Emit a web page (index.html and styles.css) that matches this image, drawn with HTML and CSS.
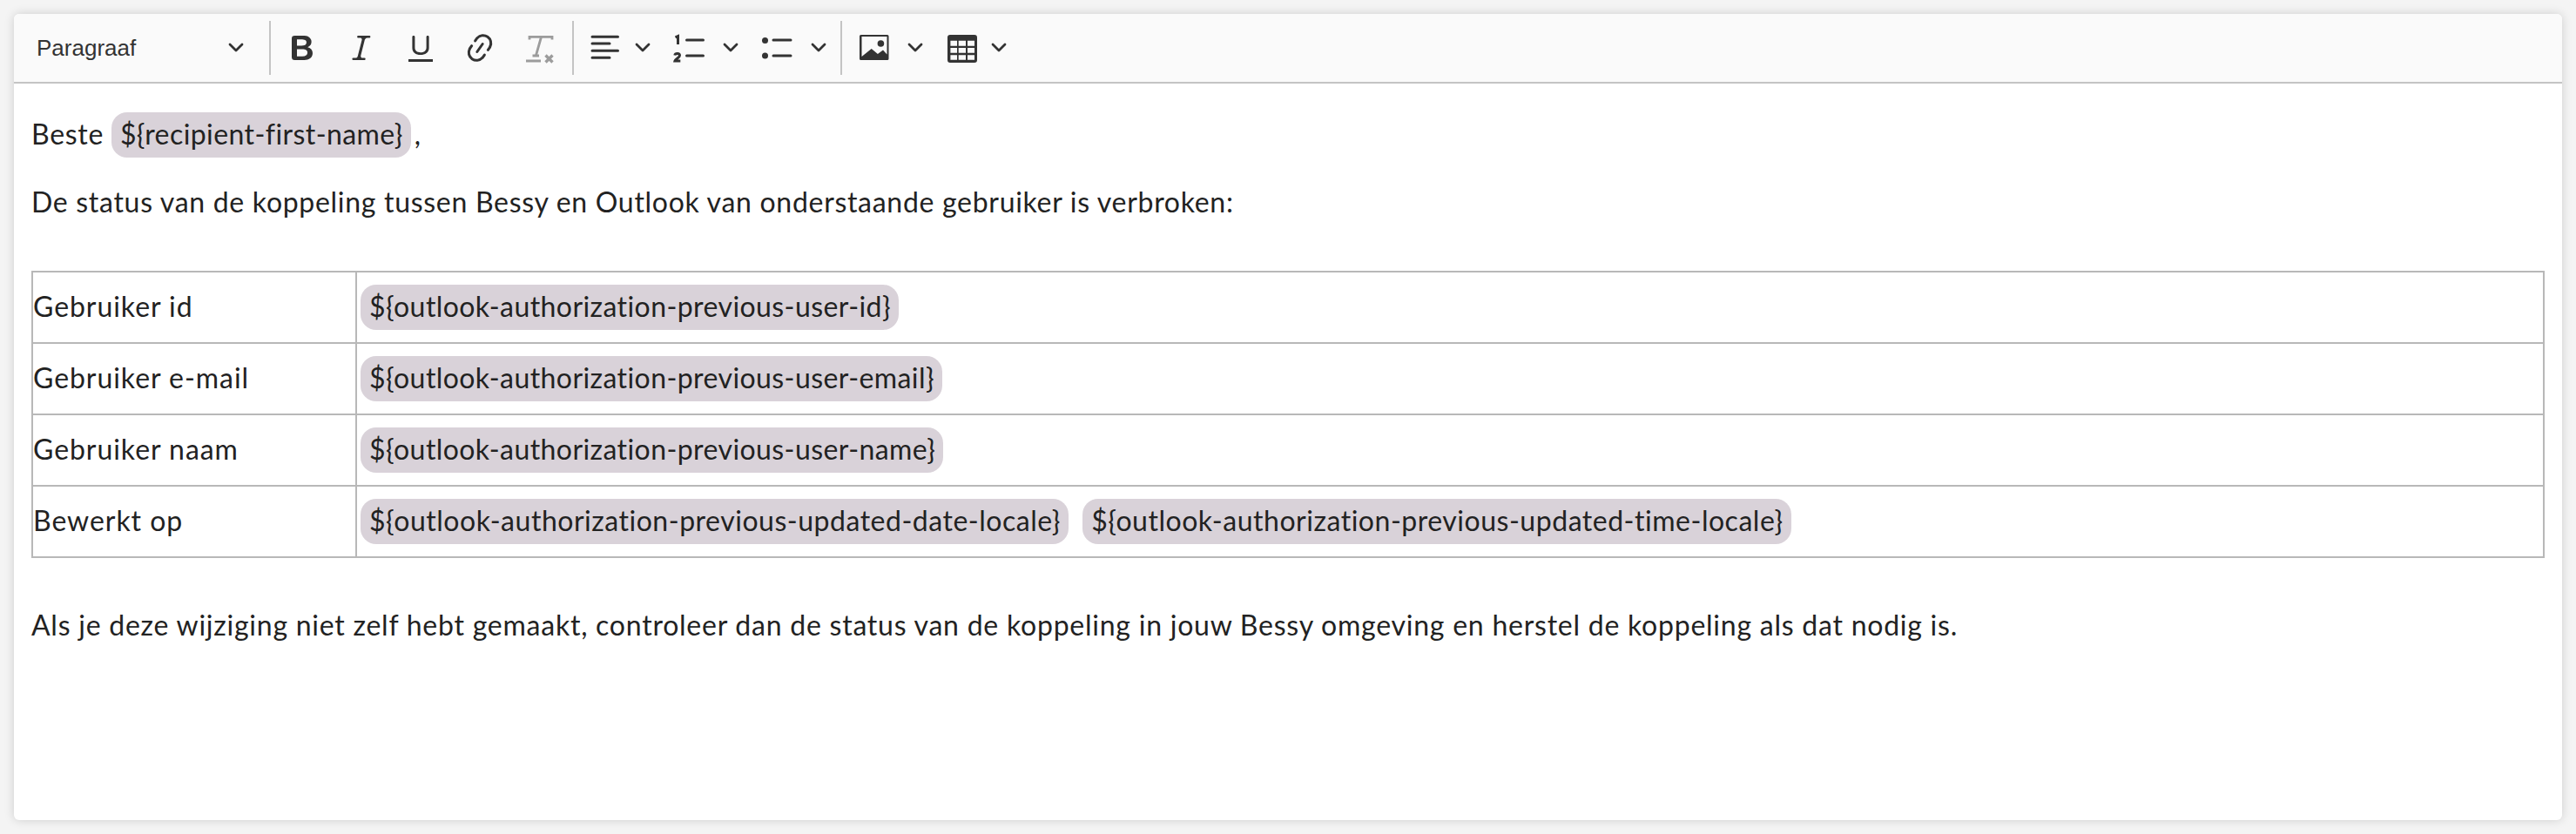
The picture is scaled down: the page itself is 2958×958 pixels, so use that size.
FILE: index.html
```html
<!DOCTYPE html>
<html lang="nl">
<head>
<meta charset="utf-8">
<title>Editor</title>
<link rel="stylesheet" href="styles.css">
</head>
<body>
<main class="editor">
  <div class="toolbar">
    <div class="heading"><span>Paragraaf</span>
      <svg class="chev" viewBox="0 0 18 12"><path d="M2 2l7 7 7-7"/></svg></div>
    <div class="sep"></div>
    <div class="btn"><svg class="icon" viewBox="0 0 20 20"><path d="M10.187 17H5.773c-.637 0-1.092-.138-1.364-.415-.273-.277-.409-.718-.409-1.323V4.738c0-.617.14-1.062.419-1.332.279-.27.73-.406 1.354-.406h4.68c.69 0 1.288.041 1.793.124.506.083.96.242 1.36.478.341.197.644.447.906.75a3.262 3.262 0 0 1 .808 2.162c0 1.401-.722 2.426-2.167 3.075C15.05 10.175 16 11.315 16 13.01a3.756 3.756 0 0 1-2.296 3.504 6.1 6.1 0 0 1-1.517.377c-.571.073-1.238.11-2 .11zm-.217-6.217H7v4.087h3.069c1.977 0 2.965-.69 2.965-2.072 0-.707-.256-1.22-.768-1.537-.512-.319-1.277-.478-2.296-.478zM7 5.13v3.619h2.606c.729 0 1.292-.067 1.69-.2a1.6 1.6 0 0 0 .91-.765c.165-.267.247-.566.247-.897 0-.707-.26-1.176-.778-1.409-.519-.232-1.31-.348-2.375-.348H7z"/></svg></div>
    <div class="btn"><svg class="icon" viewBox="0 0 20 20"><path d="m9.586 14.633.021.004c-.036.335.095.655.393.962.082.083.173.15.274.201h1.474a.6.6 0 1 1 0 1.2H5.304a.6.6 0 0 1 0-1.2h1.15c.474-.07.809-.182 1.005-.334.157-.122.291-.32.404-.597l2.416-9.55a1.053 1.053 0 0 0-.281-.823 1.12 1.12 0 0 0-.442-.296H8.15a.6.6 0 0 1 0-1.2h6.443a.6.6 0 1 1 0 1.2h-1.195c-.376.056-.65.155-.823.296-.215.175-.423.439-.623.79l-2.366 9.347z"/></svg></div>
    <div class="btn"><svg class="icon" viewBox="0 0 20 20"><path d="M3 18v-1.500h14V18zm2.200-8V3.600c0-.4.4-.6.8-.6.3 0 .7.2.7.6v6.200c0 2 1.300 2.800 3.200 2.800 1.900 0 3.400-.9 3.400-2.900V3.600c0-.4.4-.6.8-.6.3 0 .7.2.7.6V10c0 2.700-2.200 4-4.900 4-2.600 0-4.700-1.200-4.700-4z"/></svg></div>
    <div class="btn"><svg class="icon" viewBox="0 0 20 20"><path d="m11.077 15 .991-1.416a.75.75 0 1 1 1.229.86l-1.148 1.64a.748.748 0 0 1-.217.206 5.251 5.251 0 0 1-8.503-5.955.741.741 0 0 1 .12-.274l1.147-1.639a.75.75 0 1 1 1.228.86L4.933 10.7l.006.003a3.75 3.75 0 0 0 6.132 4.294l.006.004zm5.494-5.335a.748.748 0 0 1-.12.274l-1.147 1.639a.75.75 0 1 1-1.228-.86l.86-1.23a3.75 3.75 0 0 0-6.144-4.301l-.86 1.229a.75.75 0 0 1-1.229-.86l1.148-1.64a.748.748 0 0 1 .217-.206 5.251 5.251 0 0 1 8.503 5.955zm-4.563-2.532a.75.75 0 0 1 .184 1.045l-3.155 4.505a.75.75 0 1 1-1.229-.86l3.155-4.506a.75.75 0 0 1 1.045-.184z"/></svg></div>
    <div class="btn"><svg class="icon icon-muted" viewBox="0 0 40 40"><path class="stroke" d="M9 10.500V7.300h26V10.500M22.500 7.500L16.500 28.500M12.500 29h7.500M5 35h17"/><path class="stroke-x" d="M27.500 28.500l8 8m0-8l-8 8"/></svg></div>
    <div class="sep sep-end"></div>
    <div class="split"><svg class="icon-wide" viewBox="0 0 48 40"><path class="stroke" d="M11 7.300h29.500M11 15h20M11 23.300h29.500M11 31.300h20"/></svg><svg class="chev" viewBox="0 0 18 12"><path d="M2 2l7 7 7-7"/></svg></div>
    <div class="split"><svg class="icon-wide" viewBox="0 0 48 40"><path class="stroke" d="M18.500 11h19M18.500 29h19"/><path class="stroke-thin" d="M5.500 7.800l3-1.300v9.500M4.800 28.500c.6-2.600 5.700-2.600 5.700.3 0 2.300-4.800 3.700-5.500 6.200h6.300"/></svg><svg class="chev" viewBox="0 0 18 12"><path d="M2 2l7 7 7-7"/></svg></div>
    <div class="split split-last"><svg class="icon-wide" viewBox="0 0 48 40"><circle cx="7.500" cy="11.500" r="3.500"/><circle cx="7.500" cy="29" r="3.500"/><path class="stroke" d="M17 11h20M17 29h20"/></svg><svg class="chev" viewBox="0 0 18 12"><path d="M2 2l7 7 7-7"/></svg></div>
    <div class="sep sep-end"></div>
    <div class="split split-image"><svg class="icon-wide" viewBox="0 0 48 40"><path fill-rule="evenodd" d="M11.500 5h30.500a1.500 1.500 0 0 1 1.500 1.500V32.500a1.500 1.500 0 0 1-1.500 1.500H11.500a1.500 1.500 0 0 1-1.500-1.500V6.500A1.500 1.500 0 0 1 11.500 5zm1 25l11.200-9 7.200 6 6.100-4.500 4.500 5V7H12.500z"/><circle cx="34.400" cy="15" r="3.800"/></svg><svg class="chev" viewBox="0 0 18 12"><path d="M2 2l7 7 7-7"/></svg></div>
    <div class="split"><svg class="icon-wide" viewBox="0 0 48 40"><path fill-rule="evenodd" d="M13 5h28a3 3 0 0 1 3 3v26a3 3 0 0 1-3 3H13a3 3 0 0 1-3-3V8a3 3 0 0 1 3-3zm.400 6.700v6h7.600v-6zm9.300 0v6H31v-6zm10.300 0v6h8v-6zM13.400 20v5.700H21V20zm9.300 0v5.700H31V20zm10.300 0v5.700h8V20zM13.400 28.300v5.400H21v-5.400zm9.300 0v5.400H31v-5.400zm10.300 0v5.400h8v-5.400z"/></svg><svg class="chev" viewBox="0 0 18 12"><path d="M2 2l7 7 7-7"/></svg></div>
  </div>
  <div class="content">
    <p class="greeting">Beste <span class="tag">${recipient-first-name}</span>,</p>
    <p class="intro">De status van de koppeling tussen Bessy en Outlook van onderstaande gebruiker is verbroken:</p>
    <table class="data">
      <tr><td class="label">Gebruiker id</td><td><span class="tag">${outlook-authorization-previous-user-id}</span></td></tr>
      <tr><td class="label">Gebruiker e-mail</td><td><span class="tag">${outlook-authorization-previous-user-email}</span></td></tr>
      <tr><td class="label">Gebruiker naam</td><td><span class="tag">${outlook-authorization-previous-user-name}</span></td></tr>
      <tr><td class="label">Bewerkt op</td><td><span class="tag tag-long">${outlook-authorization-previous-updated-date-locale}</span> <span class="tag tag-long">${outlook-authorization-previous-updated-time-locale}</span></td></tr>
    </table>
    <p class="closing">Als je deze wijziging niet zelf hebt gemaakt, controleer dan de status van de koppeling in jouw Bessy omgeving en herstel de koppeling als dat nodig is.</p>
  </div>
</main>
</body>
</html>
```
FILE: styles.css
```css
* { box-sizing: border-box; }
html, body { height: 100%; }
body {
  margin: 0;
  padding: 16px;
  background: #f4f4f4;
  font-family: Lato, "Open Sans", sans-serif;
  color: #222;
}
.editor {
  width: 2926px;
  height: 926px;
  background: #fff;
  border-radius: 6px;
  box-shadow: 0 0 12px rgba(0, 0, 0, .16);
  overflow: hidden;
}
.toolbar {
  height: 80px;
  display: flex;
  align-items: center;
  background: #fafafa;
  border-bottom: 2px solid #c4c4c4;
  color: #333;
}
.toolbar svg { display: block; flex: none; fill: #333; }
.toolbar .stroke { fill: none; stroke: #333; stroke-width: 3; stroke-linecap: round; }
.toolbar .stroke-thin { fill: none; stroke: #333; stroke-width: 3; }
.heading {
  width: 289px;
  padding: 0 25px 0 26px;
  display: flex;
  align-items: center;
  justify-content: space-between;
  font: 26px "Liberation Sans", Arial, sans-serif;
}
.chev { width: 18px; height: 12px; }
.toolbar .chev path { fill: none; stroke: #333; stroke-width: 2.800; stroke-linecap: round; stroke-linejoin: round; }
.sep { width: 2px; height: 62px; margin: 0 2px 0 4px; background: #c4c4c4; flex: none; }
.sep-end { margin-right: 4px; }
.btn { width: 68px; padding: 0 14px; flex: none; }
.icon { width: 40px; height: 40px; }
.toolbar .icon-muted .stroke { stroke: #9c9c9c; stroke-width: 2.800; stroke-linecap: butt; }
.toolbar .icon-muted .stroke-x { fill: none; stroke: #9c9c9c; stroke-width: 3.400; }
.split { width: 101px; padding-left: 6px; display: flex; align-items: center; gap: 12px; flex: none; }
.split-last { width: 96px; }
.split-image { gap: 17px; }
.icon-wide { width: 48px; height: 40px; }
.content { padding: 0 20px; }
.content p { margin: 0; font-size: 32px; letter-spacing: .7px; }
.greeting { padding-top: 32px; line-height: 52px; height: 84px; }
.intro { padding-top: 30px; line-height: 44px; height: 84px; }
.tag {
  display: inline-block;
  height: 52px;
  margin: 0 4px;
  padding: 0 9px 0 10px;
  line-height: 50px;
  border-radius: 18px;
  background: #d9d2d9;
  font-size: 32px;
  letter-spacing: .42px;
}
.greeting .tag { margin-left: 0; }
.tag-long { letter-spacing: .52px; }
.data {
  width: 2886px;
  margin-top: 47px;
  border-collapse: collapse;
  table-layout: fixed;
  font-size: 32px;
}
.data td { height: 82px; padding: 0; border: 2px solid #b8b8b8; white-space: nowrap; }
.data .label { width: 372px; padding: 0 0 4px; letter-spacing: .95px; }
.content .closing { padding-top: 55px; line-height: 44px; letter-spacing: .76px; }
```
